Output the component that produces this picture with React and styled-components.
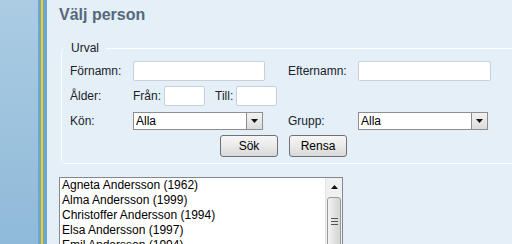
import React from 'react';
import styled, { createGlobalStyle } from 'styled-components';

const GlobalStyle = createGlobalStyle`
    html, body {
        margin: 0;
        padding: 0;
        overflow: hidden;
    }
    body {
        font-family: "Liberation Sans", Arial, sans-serif;
        font-size: 12px;
        color: #1a222c;
    }
`;

const Page = styled.div`
    display: flex;
    width: 512px;
    height: 244px;
    overflow: hidden;
    background: #e4eff7;
`;

const Sidebar = styled.div`
    display: flex;
    flex: 0 0 47px;
`;

const SidebarPanel = styled.div`
    flex: 0 0 38px;
    background: linear-gradient(#abcce3, #8fbad9);
`;

const SidebarEdge = styled.div`
    flex: 0 0 9px;
    display: flex;
    justify-content: center;
    background: #6da6d2;
    &::after {
        content: '';
        width: 2px;
        margin-left: -1px;
        background: #f6d200;
    }
`;

const Main = styled.div`
    flex: 1;
    min-width: 0;
    padding-left: 12px;
`;

const Title = styled.h1`
    margin: 0;
    padding-top: 5px;
    font-size: 16px;
    line-height: 20px;
    font-weight: bold;
    color: #56687b;
`;

const Fieldset = styled.fieldset`
    margin: 16px 0 0 2px;
    width: 480px;
    padding: 6px 8px 6px 8px;
    border: 1px solid #fbfdfe;
    border-radius: 4px;
    box-sizing: border-box;
`;

const Legend = styled.legend`
    margin-left: -6px;
    padding: 0 7px;
    font-size: 12px;
    line-height: 14px;
`;

const Grid = styled.div`
    display: grid;
    grid-template-columns: 63px 155px 70px auto;
    grid-auto-rows: auto;
    row-gap: 5px;
    align-items: center;
`;

const Label = styled.span`
    white-space: nowrap;
`;

const Input = styled.div`
    box-sizing: border-box;
    width: ${p => p.$w}px;
    height: 20px;
    background: #fff;
    border: 1px solid #c9d0d7;
    border-radius: 2px;
`;

const Inline = styled.div`
    display: flex;
    align-items: center;
`;

const InlineLabel = styled.span`
    margin: 0 3px 0 ${p => p.$gap || 0}px;
`;

const Select = styled.div`
    box-sizing: border-box;
    display: flex;
    align-items: center;
    width: ${p => p.$w}px;
    height: 18px;
    margin-top: 1px;
    background: #fff;
    border: 1px solid #8e8e8e;
`;

const SelectText = styled.span`
    flex: 1;
    padding-left: 2px;
    color: #000;
`;

const SelectArrow = styled.div`
    box-sizing: border-box;
    display: flex;
    align-items: center;
    justify-content: center;
    width: 16px;
    height: 16px;
    background: linear-gradient(#f2f2f2, #dcdcdc);
    border-left: 1px solid #8e8e8e;
`;

const Buttons = styled.div`
    grid-column: 1 / -1;
    display: flex;
    gap: 11px;
    padding-left: 150px;
`;

const Button = styled.button`
    box-sizing: border-box;
    width: 58px;
    height: 22px;
    padding: 0;
    font-family: "Liberation Sans", Arial, sans-serif;
    font-size: 12px;
    color: #000;
    background: linear-gradient(#f7f7f7, #e9e9e9 50%, #d9d9d9);
    border: 1px solid #707070;
    border-radius: 3px;
`;

const ListBox = styled.div`
    display: flex;
    box-sizing: border-box;
    width: 284px;
    height: 90px;
    margin-top: 13px;
    background: #fff;
    border: 1px solid #828790;
`;

const Items = styled.ul`
    flex: 1;
    margin: 0;
    padding: 0 0 0 2px;
    list-style: none;
`;

const Item = styled.li`
    line-height: 15px;
    color: #000;
    white-space: nowrap;
`;

const Scrollbar = styled.div`
    flex: 0 0 16px;
    display: flex;
    flex-direction: column;
    align-items: center;
    background: #f0f0f0;
    border-left: 1px solid #e4e4e4;
`;

const ScrollArrow = styled.div`
    height: 17px;
    display: flex;
    align-items: center;
`;

const Thumb = styled.div`
    box-sizing: border-box;
    width: 14px;
    height: 60px;
    margin-top: 2px;
    display: flex;
    align-items: center;
    justify-content: center;
    padding-bottom: 12px;
    background: linear-gradient(90deg, #f3f3f3, #e2e2e2 50%, #d4d4d4);
    border: 1px solid #9a9a9a;
    border-radius: 3px;
`;

const Caret = ({ up }) => (
    <svg width="7" height="4" viewBox="0 0 7 4">
        <polygon points={up ? '3.5,0 7,4 0,4' : '0,0 7,0 3.5,4'} fill="#111" />
    </svg>
);

const Grip = () => (
    <svg width="7" height="7" viewBox="0 0 7 7">
        <rect x="0" y="0" width="7" height="1" fill="#555" />
        <rect x="0" y="3" width="7" height="1" fill="#555" />
        <rect x="0" y="6" width="7" height="1" fill="#555" />
    </svg>
);

const people = [
    'Agneta Andersson (1962)',
    'Alma Andersson (1999)',
    'Christoffer Andersson (1994)',
    'Elsa Andersson (1997)',
    'Emil Andersson (1994)',
];

const App = () => {
    return (
        <Page>
            <GlobalStyle />
            <Sidebar>
                <SidebarPanel />
                <SidebarEdge />
            </Sidebar>
            <Main>
                <Title>Välj person</Title>
                <Fieldset>
                    <Legend>Urval</Legend>
                    <Grid>
                        <Label>Förnamn:</Label>
                        <Input $w={132} />
                        <Label>Efternamn:</Label>
                        <Input $w={133} />

                        <Label>Ålder:</Label>
                        <Inline>
                            <InlineLabel>Från:</InlineLabel>
                            <Input $w={41} />
                            <InlineLabel $gap={10}>Till:</InlineLabel>
                            <Input $w={41} />
                        </Inline>
                        <span />
                        <span />

                        <Label>Kön:</Label>
                        <Select $w={130}>
                            <SelectText>Alla</SelectText>
                            <SelectArrow><Caret /></SelectArrow>
                        </Select>
                        <Label>Grupp:</Label>
                        <Select $w={130}>
                            <SelectText>Alla</SelectText>
                            <SelectArrow><Caret /></SelectArrow>
                        </Select>

                        <Buttons>
                            <Button>Sök</Button>
                            <Button>Rensa</Button>
                        </Buttons>
                    </Grid>
                </Fieldset>
                <ListBox>
                    <Items>
                        {people.map(name => (
                            <Item key={name}>{name}</Item>
                        ))}
                    </Items>
                    <Scrollbar>
                        <ScrollArrow><Caret up /></ScrollArrow>
                        <Thumb><Grip /></Thumb>
                    </Scrollbar>
                </ListBox>
            </Main>
        </Page>
    );
};

export default App;
